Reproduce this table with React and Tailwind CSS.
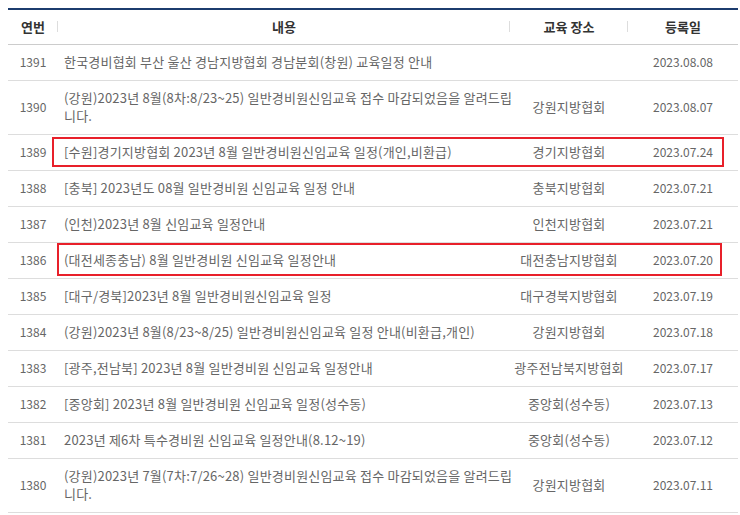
import React from "react";

const rows = [
  { no: "1391", title: ["한국경비협회 부산 울산 경남지방협회 경남분회(창원) 교육일정 안내"], place: "", date: "2023.08.08" },
  { no: "1390", title: ["(강원)2023년 8월(8차:8/23~25) 일반경비원신임교육 접수 마감되었음을 알려드립", "니다."], place: "강원지방협회", date: "2023.08.07" },
  { no: "1389", title: ["[수원]경기지방협회 2023년 8월 일반경비원신임교육 일정(개인,비환급)"], place: "경기지방협회", date: "2023.07.24", box: "a" },
  { no: "1388", title: ["[충북] 2023년도 08월 일반경비원 신임교육 일정 안내"], place: "충북지방협회", date: "2023.07.21" },
  { no: "1387", title: ["(인천)2023년 8월 신임교육 일정안내"], place: "인천지방협회", date: "2023.07.21" },
  { no: "1386", title: ["(대전세종충남) 8월 일반경비원 신임교육 일정안내"], place: "대전충남지방협회", date: "2023.07.20", box: "b" },
  { no: "1385", title: ["[대구/경북]2023년 8월 일반경비원신임교육 일정"], place: "대구경북지방협회", date: "2023.07.19" },
  { no: "1384", title: ["(강원)2023년 8월(8/23~8/25) 일반경비원신임교육 일정 안내(비환급,개인)"], place: "강원지방협회", date: "2023.07.18" },
  { no: "1383", title: ["[광주,전남북] 2023년 8월 일반경비원 신임교육 일정안내"], place: "광주전남북지방협회", date: "2023.07.17" },
  { no: "1382", title: ["[중앙회] 2023년 8월 일반경비원 신임교육 일정(성수동)"], place: "중앙회(성수동)", date: "2023.07.13" },
  { no: "1381", title: ["2023년 제6차 특수경비원 신임교육 일정안내(8.12~19)"], place: "중앙회(성수동)", date: "2023.07.12" },
  { no: "1380", title: ["(강원)2023년 7월(7차:7/26~28) 일반경비원신임교육 접수 마감되었음을 알려드립", "니다."], place: "강원지방협회", date: "2023.07.11" },
];

const font = { fontFamily: '"Noto Sans CJK KR", "Noto Sans", sans-serif' };

export default function App() {
  return (
    <div className="w-[740px] h-[515px] bg-white overflow-hidden pt-[8px] pl-[8px]" style={font}>
      <div className="w-[730px] border-t-2 border-[#1c3c6e]">
        <div className="flex h-[35px] items-center border-b border-[#cccccc] text-[13px] font-bold text-[#333333]">
          <div className="w-[50px] text-center relative">연번
            <span className="absolute right-0 top-[4px] h-[11px] w-px bg-[#dddddd]" />
          </div>
          <div className="w-[452px] text-center relative">내용
            <span className="absolute right-0 top-[4px] h-[11px] w-px bg-[#dddddd]" />
          </div>
          <div className="w-[118px] text-center relative">교육 장소
            <span className="absolute right-0 top-[4px] h-[11px] w-px bg-[#dddddd]" />
          </div>
          <div className="w-[110px] text-center">등록일</div>
        </div>
        {rows.map((r) => (
          <div key={r.no} className="relative flex items-center border-b border-[#dddddd] pt-[8px] pb-[9px] leading-[18px] text-[#666666]">
            <div className="w-[50px] text-center text-[12px]">{r.no}</div>
            <div className="w-[452px] pl-[6px] pr-[4px] text-[13px] tracking-[0.2px] whitespace-nowrap">
              {r.title.map((t, i) => (
                <div key={i}>{t}</div>
              ))}
            </div>
            <div className="w-[118px] text-center text-[13px] tracking-[0.2px]">{r.place}</div>
            <div className="w-[110px] text-center text-[12px]">{r.date}</div>
            {r.box === "a" && (
              <div className="absolute left-[44px] right-[14px] top-[2px] bottom-[3px] border-2 border-[#e8202a]" />
            )}
            {r.box === "b" && (
              <div className="absolute left-[49px] right-[16px] top-[0px] bottom-[2px] border-2 border-[#e8202a]" />
            )}
          </div>
        ))}
      </div>
    </div>
  );
}
